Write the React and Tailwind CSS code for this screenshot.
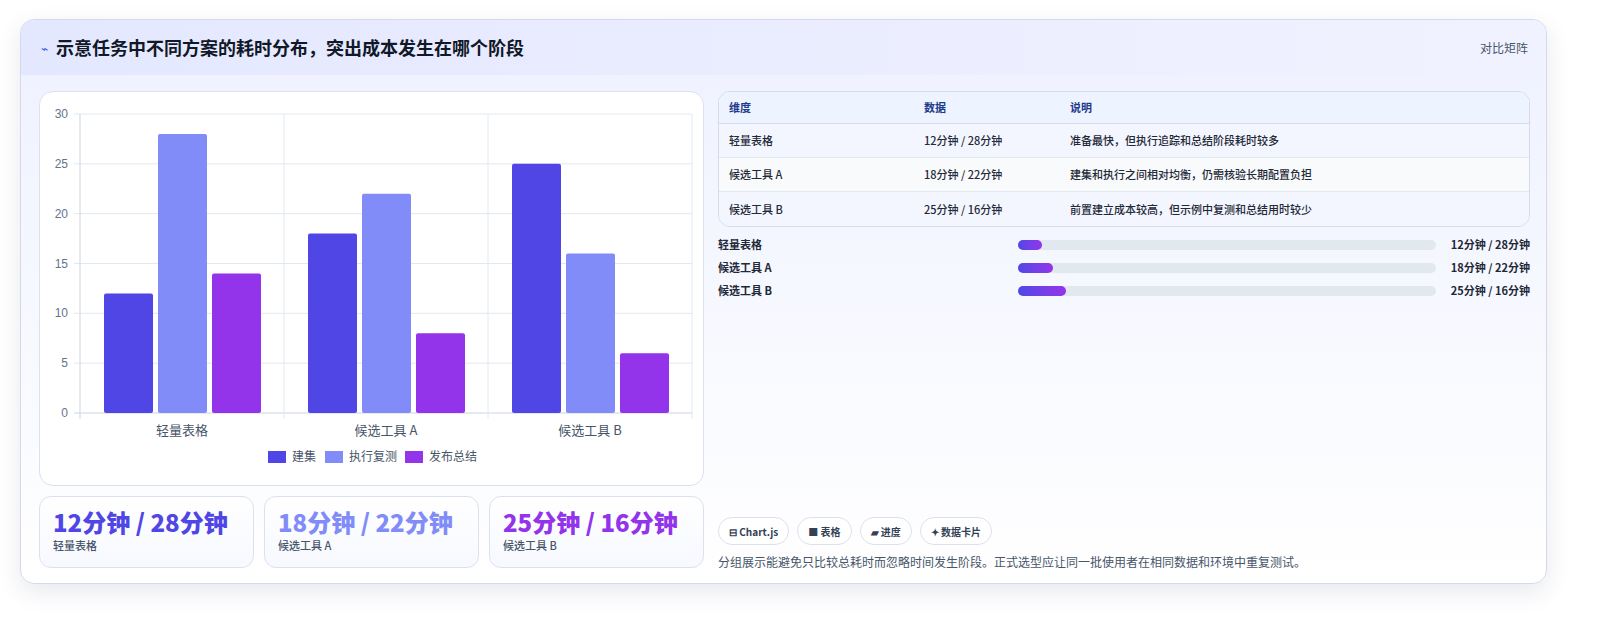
export default function App() {
  const F = { fontFamily: '"Noto Sans CJK SC", "Noto Sans", sans-serif' };
  const groups = [
    { name: "轻量表格", v: [12, 28, 14] },
    { name: "候选工具 A", v: [18, 22, 8] },
    { name: "候选工具 B", v: [25, 16, 6] },
  ];
  const colors = ["#4f46e5", "#818cf8", "#9333ea"];
  const px = 40, py = 22, pw = 612, ph = 299;
  const y = (v) => py + ph - (v / 30) * ph;
  const rows = [
    ["轻量表格", "12分钟 / 28分钟", "准备最快，但执行追踪和总结阶段耗时较多", 24],
    ["候选工具 A", "18分钟 / 22分钟", "建集和执行之间相对均衡，仍需核验长期配置负担", 35],
    ["候选工具 B", "25分钟 / 16分钟", "前置建立成本较高，但示例中复测和总结用时较少", 48],
  ];
  return (
    <div style={F} className="w-[1606px] h-[620px] bg-white pt-[19px] px-[20px]">
      <div className="w-[1527px] h-[565px] rounded-[14px] border border-[#d5d9ef] bg-gradient-to-b from-[#eef1ff] to-white shadow-[0_8px_24px_rgba(30,40,90,0.10)] overflow-hidden">
        <div className="h-[55px] flex items-center justify-between pl-[20px] pr-[18px] bg-gradient-to-r from-[#e4e8ff] to-[#f1f2ff]">
          <div className="flex items-center gap-[8px]">
            <span className="text-[#3b5bdb] text-[12px]">⌁</span>
            <span className="text-[18px] font-bold text-[#111827]">示意任务中不同方案的耗时分布，突出成本发生在哪个阶段</span>
          </div>
          <span className="text-[12px] text-[#475569]">对比矩阵</span>
        </div>
        <div className="flex gap-[14px] pt-[16px] pl-[18px] pr-[16px]">
          <div className="w-[665px] flex flex-col gap-[10px]">
            <div className="h-[395px] rounded-[14px] border border-[#dbe1ee] bg-white">
              <svg width="663" height="393" style={{ fontFamily: '"Liberation Sans", "Noto Sans CJK SC", sans-serif' }}>
                {[0, 5, 10, 15, 20, 25, 30].map((t) => (
                  <g key={t}>
                    <line x1={px - 6} x2={px + pw} y1={y(t)} y2={y(t)} stroke={t === 0 ? "#cbd5e1" : "#e2e8f0"} />
                    <text x={px - 12} y={y(t) + 4} fontSize="12" fill="#64748b" textAnchor="end">{t}</text>
                  </g>
                ))}
                {[0, 1, 2, 3].map((i) => (
                  <line key={i} x1={px + i * 204} x2={px + i * 204} y1={py} y2={py + ph + 6} stroke={i === 0 ? "#cbd5e1" : "#e2e8f0"} />
                ))}
                {groups.map((g, gi) =>
                  g.v.map((v, bi) => (
                    <rect key={gi + "-" + bi} x={px + gi * 204 + 24 + bi * 54} y={y(v)} width="49" height={py + ph - y(v)} rx="2" fill={colors[bi]} />
                  ))
                )}
                {groups.map((g, gi) => (
                  <text key={g.name} x={px + gi * 204 + 102} y="343" fontSize="13" fill="#475569" textAnchor="middle" style={F}>{g.name}</text>
                ))}
                {[["建集", 228], ["执行复测", 285], ["发布总结", 365]].map(([n, x], i) => (
                  <g key={n}>
                    <rect x={x} y="359" width="18" height="12" fill={colors[i]} />
                    <text x={x + 24} y="369" fontSize="12" fill="#475569" style={F}>{n}</text>
                  </g>
                ))}
              </svg>
            </div>
            <div className="flex gap-[10px]">
              {rows.map((r, i) => (
                <div key={r[0]} className="flex-1 h-[72px] rounded-[12px] border border-[#dbe1ee] bg-gradient-to-b from-white to-[#f7f9ff] px-[13px] pt-[9px]">
                  <div className="text-[24px] font-extrabold leading-[31px]" style={{ color: colors[i] }}>{r[1]}</div>
                  <div className="text-[11px] text-[#475569] font-medium">{r[0]}</div>
                </div>
              ))}
            </div>
          </div>
          <div className="flex-1 flex flex-col">
            <div className="rounded-[12px] border border-[#d5dbea] overflow-hidden text-[11px]">
              <div className="flex h-[32px] items-center bg-[#eef4ff] border-b border-[#d5dbea] font-semibold text-[#1e3a8a] px-[10px]">
                <div className="w-[195px]">维度</div><div className="w-[146px]">数据</div><div>说明</div>
              </div>
              {rows.map((r, i) => (
                <div key={r[0]} className={"flex h-[34px] items-center px-[10px] text-[#1f2937] font-medium " + (i < 2 ? "border-b border-[#e2e8f0] " : "") + (i === 1 ? "bg-[#f8fafc]" : "bg-[#f3f6ff]")}>
                  <div className="w-[195px]">{r[0]}</div><div className="w-[146px]">{r[1]}</div><div>{r[2]}</div>
                </div>
              ))}
            </div>
            <div className="flex flex-col gap-[8px] mt-[10px]">
              {rows.map((r) => (
                <div key={r[0]} className="flex items-center h-[15px] text-[11px] font-semibold text-[#1f2937]">
                  <div className="w-[300px]">{r[0]}</div>
                  <div className="w-[418px] h-[10px] rounded-full bg-[#e2e8f0]">
                    <div className="h-full rounded-full bg-gradient-to-r from-[#4f46e5] to-[#9333ea]" style={{ width: r[3] }} />
                  </div>
                  <div className="flex-1 text-right">{r[1]}</div>
                </div>
              ))}
            </div>
            <div className="mt-[219px] flex gap-[8px]">
              {["⊟ Chart.js", "■ 表格", "▰ 进度", "✦ 数据卡片"].map((t) => (
                <span key={t} className="h-[28px] px-[10px] flex items-center rounded-full border border-[#dbe1ee] bg-white text-[10px] font-semibold text-[#334155]">{t}</span>
              ))}
            </div>
            <div className="mt-[8px] text-[12px] text-[#475569]">分组展示能避免只比较总耗时而忽略时间发生阶段。正式选型应让同一批使用者在相同数据和环境中重复测试。</div>
          </div>
        </div>
      </div>
    </div>
  );
}
